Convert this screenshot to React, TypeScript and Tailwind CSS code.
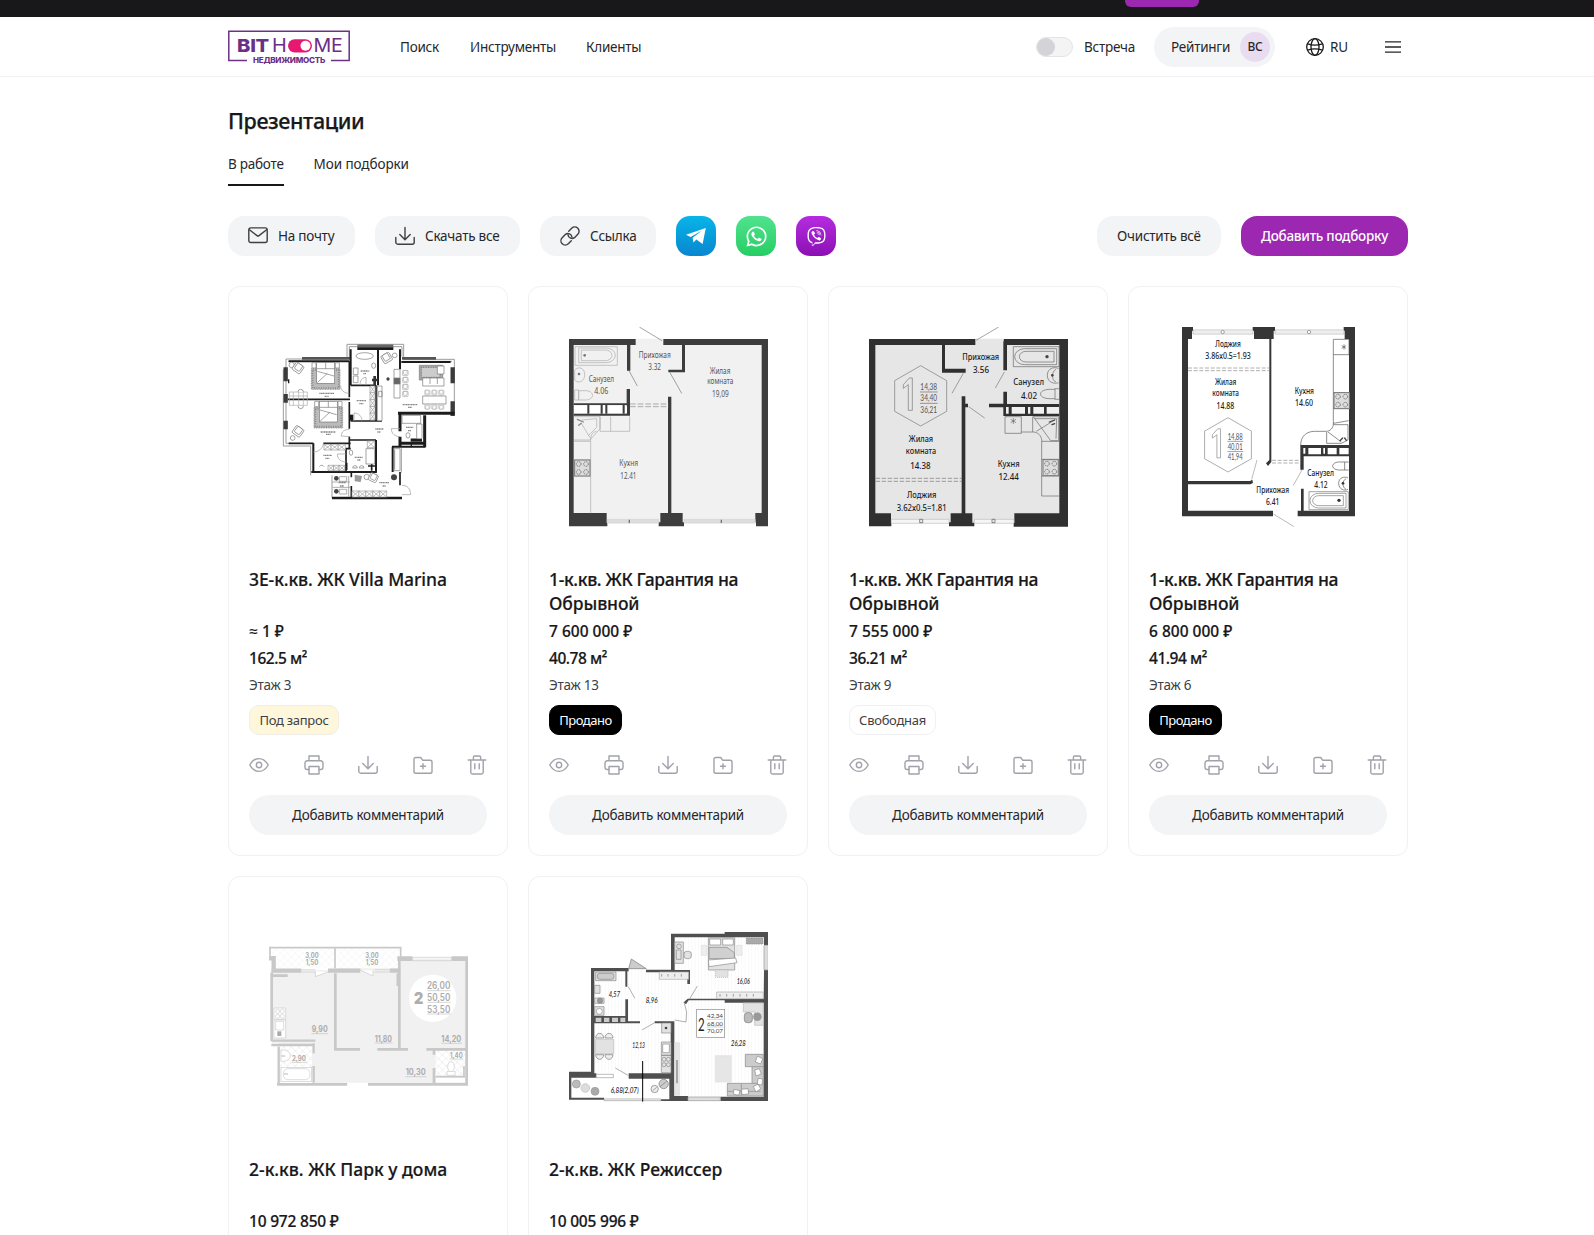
import type { ReactNode } from "react";
import { FaViber, FaWhatsapp } from "react-icons/fa";

/* ---------- icons ---------- */

function Icon({ children, width = 1.4, className = "" }: { children: ReactNode; width?: number; className?: string }) {
  return (
    <svg viewBox="0 0 20 20" fill="none" stroke="currentColor" strokeWidth={width} strokeLinecap="round" strokeLinejoin="round" className={`h-5 w-5 shrink-0 ${className}`}>
      {children}
    </svg>
  );
}

const EyeIcon = () => (
  <Icon>
    <path d="M.8 10C3 6 6.300 3.600 10 3.600S17 6 19.200 10C17 14 13.700 16.400 10 16.400S3 14 .8 10z" />
    <circle cx="10" cy="10" r="2.700" />
  </Icon>
);
const PrinterIcon = () => (
  <Icon>
    <path d="M5 5.800V1h10v4.800M5 14.500H3.200A2.200 2.200 0 0 1 1 12.300V8a2.200 2.200 0 0 1 2.200-2.200h13.600A2.200 2.200 0 0 1 19 8v4.300a2.200 2.200 0 0 1-2.200 2.200H15" />
    <path d="M5 11.500h10V19H5z" />
  </Icon>
);
const DownloadIcon = () => (
  <Icon>
    <path d="M10 1.500v12M4.800 8.500l5.200 5.200 5.200-5.200M.8 11.500v4.700A2 2 0 0 0 2.800 18.200h14.400a2 2 0 0 0 2-2v-4.700" />
  </Icon>
);
const FolderIcon = () => (
  <Icon>
    <path d="M1 4.300a1.800 1.800 0 0 1 1.800-1.800h4.800l2 2.700h7.600A1.800 1.800 0 0 1 19 7v9.400a1.800 1.800 0 0 1-1.800 1.800H2.800A1.800 1.800 0 0 1 1 16.400zM10 8.800v5M7.500 11.300h5" />
  </Icon>
);
const TrashIcon = () => (
  <Icon>
    <path d="M1.200 5h17.600M6.400 5V2.200a1.200 1.200 0 0 1 1.200-1.200h4.800a1.200 1.200 0 0 1 1.200 1.200V5M3.800 5v12.500A1.600 1.600 0 0 0 5.400 19h9.200a1.600 1.600 0 0 0 1.600-1.500V5M7.800 8.800v5M12.200 8.800v5" />
  </Icon>
);
const MailIcon = () => (
  <Icon>
    <rect x=".8" y="1.900" width="18.400" height="14.600" rx="2" />
    <path d="M1.400 3.800L9 9.600a1.600 1.600 0 0 0 2 0l7.600-5.800" />
  </Icon>
);
const LinkIcon = () => (
  <Icon>
    <path d="M8 8.800a4.200 4.200 0 0 0 6.500 2.900l3.300-3.400A4.300 4.300 0 0 0 11.700 2.200L8.700 5.200" />
    <path d="M12 11.200a4.200 4.200 0 0 0-6.500-2.900L2.200 11.700a4.300 4.300 0 0 0 6.100 6.100l3-3" />
  </Icon>
);
const GlobeIcon = () => (
  <svg viewBox="0 0 18 18" fill="none" stroke="#18181b" strokeWidth="1.3" className="h-[18px] w-[18px]">
    <circle cx="9" cy="9" r="8.300" />
    <ellipse cx="9" cy="9" rx="4" ry="8.300" />
    <path d="M1.600 5.800C6 7.300 12 7.300 16.400 5.800M1.600 12.200C6 10.700 12 10.700 16.400 12.200" />
  </svg>
);
const MenuIcon = () => (
  <svg viewBox="0 0 16 12" stroke="#27272a" strokeWidth="1.3" className="h-3 w-4">
    <path d="M0 .8h16M0 6h16M0 11.200h16" />
  </svg>
);
const TelegramIcon = () => (
  <svg viewBox="9 9 22 22" fill="currentColor" className="h-[22px] w-[22px]">
    <path d="M10 18.800L29.800 12 26.600 28l-6.200-4.400-3.100 2.800-.6-4.600L26 14.600 14.600 21z" />
  </svg>
);

function Logo() {
  return (
    <svg viewBox="0 0 122 34" className="h-[34px] w-[122px] shrink-0" fontFamily="Inter, sans-serif">
      <path d="M19 30.600H.8V1.200H121.200V30.600H103" fill="none" stroke="#6b3285" strokeWidth="1.500" />
      <text x="9" y="22.300" fontSize="18" fontWeight="800" fill="#6b2f86" textLength="32" lengthAdjust="spacingAndGlyphs">BIT</text>
      <text x="44" y="22.300" fontSize="18" fontWeight="400" fill="#6b2f86" textLength="14.500" lengthAdjust="spacingAndGlyphs">H</text>
      <rect x="60" y="9.200" width="24" height="13.200" rx="6.600" fill="#e6186f" />
      <circle cx="77.500" cy="15.800" r="5" fill="#fff" />
      <text x="85.500" y="22.300" fontSize="18" fontWeight="400" fill="#6b2f86" textLength="29" lengthAdjust="spacingAndGlyphs">ME</text>
      <text x="25" y="33.200" fontSize="7.800" fontWeight="800" fill="#6b2f86" textLength="72" lengthAdjust="spacingAndGlyphs">НЕДВИЖИМОСТЬ</text>
    </svg>
  );
}

/* ---------- floor plans ---------- */

type LabelProps = { x: number; y: number; w: number; s?: number; fill?: string; weight?: number; children: string };

function Label({ x, y, w, s = 29, fill = "#333", weight = 500, children }: LabelProps) {
  return (
    <text x={x} y={y} fontSize={s} fill={fill} fontWeight={weight} textAnchor="middle" textLength={w} lengthAdjust="spacingAndGlyphs">
      {children}
    </text>
  );
}

function Plan({ top = 123, font = "Noto Sans, sans-serif", children }: { top?: number; font?: string; children: ReactNode }) {
  return (
    <svg viewBox={`120 ${top} 600 600`} className="h-[200px] w-[200px]" fontFamily={font}>
      {children}
    </svg>
  );
}

function Hob({ x, y }: { x: number; y: number }) {
  return (
    <g fill="none" stroke="#777" strokeWidth="3">
      <rect x={x} y={y} width="46" height="48" fill="#ddd" />
      {[12, 34].map((dx) => [12, 36].map((dy) => <circle key={`${dx}-${dy}`} cx={x + dx} cy={y + dy} r="7" strokeDasharray="4 2" />))}
    </g>
  );
}

function Chair({ x, y, r = 0, s = 1 }: { x: number; y: number; r?: number; s?: number }) {
  return (
    <g transform={`translate(${x} ${y}) rotate(${r}) scale(${s})`} fill="#fff" stroke="#777" strokeWidth="2">
      <rect x="-14" y="-13" width="28" height="26" rx="4" />
      <rect x="-9" y="-13" width="18" height="20" rx="3" />
    </g>
  );
}

function Bed({ x, y }: { x: number; y: number }) {
  return (
    <g stroke="#777" strokeWidth="2">
      <rect x={x} y={y + 18} width="86" height="62" fill="#bbb" strokeDasharray="3 2" />
      <rect x={x + 4} y={y + 22} width="78" height="54" fill="none" stroke="#888" strokeWidth="5" strokeDasharray="3 4" />
      <rect x={x + 16} y={y} width="54" height="62" fill="#fff" />
      <path d={`M${x + 43} ${y}v18M${x + 16} ${y + 18}h54M${x + 18} ${y + 26}l50 14M${x + 18} ${y + 60}l30-28`} fill="none" />
      <path d={`M${x + 2} ${y}h12v16h-12zM${x + 72} ${y}h12v16h-12z`} fill="#fff" />
    </g>
  );
}

function Wardrobe({ x, y, w, h, n, vertical = false }: { x: number; y: number; w: number; h: number; n: number; vertical?: boolean }) {
  return (
    <g fill="#fff" stroke="#999" strokeWidth="2">
      {Array.from({ length: n }, (_, i) => {
        const cw = vertical ? w : w / n;
        const ch = vertical ? h / n : h;
        const cx = vertical ? x : x + i * cw;
        const cy = vertical ? y + i * ch : y;
        return <path key={i} d={`M${cx} ${cy}h${cw}v${ch}h${-cw}zl${cw} ${ch}M${cx + cw} ${cy}l${-cw} ${ch}`} />;
      })}
    </g>
  );
}

function VillaPlan() {
  return (
    <Plan>
      <g fill="none" stroke="#888" strokeWidth="2.500">
        <path d="M357 218v-43h170v45M364 218v-36h158v30M174 250v-31h184M527 220h152v30M180 226h180M522 226h150M166 250v230h82v88M174 250v222h82v84M679 250v134M520 486v74M312 568v68h210" />
      </g>
      <g fill="none" stroke="#1c1c1c">
        <path d="M222 217h144M522 217h102" strokeWidth="8" stroke="#555" />
        <path d="M388 180h108" strokeWidth="9" stroke="#666" />
        <path d="M388 188h108" strokeWidth="8" />
        <path d="M173 244v42M173 324v26M173 404v26M674 244v48M674 346v44" strokeWidth="13" stroke="#3b3b3b" />
        <path d="M182 226h182M368 190v108M450 190v108M516 190v60M520 228h148" strokeWidth="6" />
        <path d="M180 340h186M364 226v108M364 348v80M364 452v36M368 298h76M444 298v106M368 405h94M182 472h74M286 472h82" strokeWidth="5" />
        <path d="M510 382h170M516 382v54M516 452v30M590 388v96" strokeWidth="9" />
        <path d="M516 472h76M548 462h34" strokeWidth="9" />
        <path d="M492 482h100M494 482v76M256 472v88M250 558h196M444 462v98" strokeWidth="6" />
        <path d="M366 462h78M354 486v72M354 488h14M370 558v16M370 600v36M516 558v40" strokeWidth="5" />
        <path d="M370 386v18" strokeWidth="12" />
        <path d="M312 636h210" strokeWidth="8" />
        <path d="M432 282h18M440 270v28" strokeWidth="8" stroke="#333" />
        <path d="M420 540h22M431 530v24M356 530v22" strokeWidth="5" />
        <path d="M550 472v12M182 280v12" strokeWidth="4" />
      </g>
      <g fill="#fff" stroke="#777" strokeWidth="2">
        <ellipse cx="410" cy="210" rx="26" ry="10" />
        <ellipse cx="437" cy="239" rx="6" ry="8" />
        <path d="M376 246h14v20h-14zM376 270h14v20h-14zM448 300h14v104h-14zM452 316h10v16h-10zM498 250h18v86h-18z" />
        <path d="M574 238h70v44h-70z" fill="#aaa" />
        <path d="M580 244h56v30h-56z" fill="#ccc" stroke="#555" strokeDasharray="3 2" />
        <path d="M584 276h64v24h-64zM606 276v18M628 276v18M628 240h20v24h-20zM584 330h70v24h-70z" />
        <path d="M184 318h54v40h-54zM184 330h54M196 318v40M212 318v40M226 318v40" fill="none" stroke="#aaa" />
        <path d="M414 488h26v46h-26zM566 414h16v44h-16zM522 388h56v24h-56zM498 488h18v66h-18zM500 492v58" />
        <path d="M498 276h18v18h-18z" fill="#666" />
        <circle cx="191" cy="237" r="8" /><circle cx="500" cy="208" r="7" /><circle cx="194" cy="456" r="7" /><circle cx="416" cy="573" r="8" />
        <ellipse cx="540" cy="448" rx="6" ry="8" /><ellipse cx="369" cy="500" rx="5" ry="8" />
        <path d="M374 546a6 6 0 0 1 14 0zM394 546a6 6 0 0 1 14 0zM210 318a8 8 0 0 1 16 0M210 360a8 8 0 0 0 16 0M274 542a8 8 0 0 1 14 0" />
      </g>
      <Chair x={210} y={246} r={35} /><Chair x={210} y={436} r={35} /><Chair x={476} y={216} r={-30} /><Chair x={436} y={575} r={25} s={0.9} />
      <g><Chair x={532} y={261} s={0.6} /><Chair x={532} y={282} s={0.6} /><Chair x={532} y={303} s={0.6} /><Chair x={532} y={324} s={0.6} /></g>
      <g><Chair x={598} y={320} s={0.55} /><Chair x={619} y={320} s={0.55} /><Chair x={640} y={320} s={0.55} /><Chair x={598} y={362} s={0.55} r={180} /><Chair x={619} y={362} s={0.55} r={180} /><Chair x={640} y={362} s={0.55} r={180} /></g>
      <Bed x={250} y={230} /><Bed x={258} y={346} />
      <Wardrobe x={426} y={300} w={15} h={102} n={5} vertical />
      <Wardrobe x={288} y={475} w={64} h={17} n={3} /><Wardrobe x={300} y={538} w={50} h={16} n={3} />
      <Wardrobe x={372} y={615} w={104} h={18} n={5} /><Wardrobe x={418} y={465} w={22} h={20} n={1} />
      <g fill="#444">
        <circle cx="498" cy="574" r="9" /><circle cx="325" cy="577" r="7" /><circle cx="325" cy="616" r="7" />
        <circle cx="480" cy="279" r="5" /><path d="M380 566l22 4-4 18-18-2z" fill="#999" />
      </g>
      <path d="M334 572h22v14h-22zM334 610h22v14h-22zM314 588h52M314 604h52M362 570v62" fill="none" stroke="#888" strokeWidth="2" />
      <g fill="none" stroke="#999" strokeWidth="2">
        <path d="M364 322c-16 0-26-10-26-22M364 430c-14 0-24 6-24 20l26 2M516 428h-26c0 14 10 24 26 24M396 298c0-14 6-24 18-24v24M378 405v-24c14 0 24 10 24 24M256 498c16 0 30-12 30-26M354 504h-26c0 14 10 24 26 24M522 598c16 0 26 10 26 28h-26" />
      </g>
      <g fill="#888" stroke="#888" strokeWidth="4" strokeDasharray="4 1">
        <path d="M274 322h44M290 331h12M398 255h26M406 263h8M386 344h28M394 353h12M524 356h44M540 364h12M278 438h44M294 445h14M442 429h24M448 438h10M286 508h26M292 517h12M380 514h24M388 522h10M454 590h30M464 600h10M534 424h22M540 434h10M332 590h22M336 600h12" />
      </g>
    </Plan>
  );
}

function GarantiaPlanA() {
  return (
    <Plan>
      <path d="M130 165h580v545H130z" fill="#f1f1f1" />
      <path d="M322 158h84v8h-84z" fill="#f1f1f1" />
      <path d="M334 123l68 41M303 254l25 46M426 260l35 62" stroke="#777" strokeWidth="2" fill="none" />
      <g fill="#3d3d3d">
        <path d="M123 159h200v18H137v504h99v29h2v11H123zM406 159h314v562h-36v-12h-2v-28h19V177H471v82h-50v-8h41v-74h-56zM397 681h23V332h10v349h34v28h4v12h-76v-12h5z" />
        <path d="M297 177h10v77h-10zM296 309h10v80H137v-6h159v-26H137v-5h159z" />
      </g>
      <path d="M138 359h40v22h-40zM185 359h32v22h-32zM225 359h7v22h-7zM239 359h44v22h-44zM290 359h7v22h-7z" fill="#fff" />
      <path d="M181 357v26M221 357v26M235 357v26M287 357v26" stroke="#3d3d3d" strokeWidth="6" />
      <path d="M306 354h116M306 362h116" stroke="#aaa" strokeWidth="3" strokeDasharray="17 6" />
      <path d="M238 700h154v12H238zM468 700h214v12H468z" fill="#ddd" stroke="#c5c5c5" strokeWidth="1" />
      <path d="M302 701h4v10h-4zM578 701h4v10h-4z" fill="#777" />
      <g fill="none" stroke="#aaa" strokeWidth="2">
        <path d="M141 182h127v56H141zM152 186h82a28 22 0 0 1 0 44h-82zM160 192h72a20 16 0 0 1 0 32h-72z" />
        <path d="M140 312h12v30h-12zM152 314h22c26 2 26 26 0 28h-22zM140 252c8-10 30-10 30 14s-22 26-30 16z" />
        <path d="M138 392h78v44h89v-45M248 392v44M216 392v36l-30 34h-48M160 402l46-4v26l-26 26M138 466h50v216M205 436c-12 2-18 14-17 30M138 570h50M138 522h50M160 412l28 46" />
      </g>
      <circle cx="170" cy="208" r="4" fill="#777" /><circle cx="153" cy="264" r="4" fill="#777" />
      <path d="M148 400l18 8M152 418l8-6" stroke="#888" strokeWidth="4" strokeLinecap="round" fill="none" />
      <Hob x={140} y={522} />
      <Label x={380} y={216} w={96} fill="#555" weight={400}>Прихожая</Label>
      <Label x={380} y={252} w={38} fill="#555" weight={400}>3.32</Label>
      <Label x={220} y={288} w={76} fill="#555" weight={400}>Санузел</Label>
      <Label x={220} y={323} w={42} fill="#555" weight={400}>4.06</Label>
      <Label x={576} y={263} w={62} fill="#555" weight={400}>Жилая</Label>
      <Label x={577} y={295} w={78} fill="#555" weight={400}>комната</Label>
      <Label x={577} y={333} w={50} fill="#555" weight={400}>19,09</Label>
      <Label x={302} y={540} w={56} fill="#555" weight={400}>Кухня</Label>
      <Label x={301} y={578} w={48} fill="#555" weight={400}>12.41</Label>
    </Plan>
  );
}

function AreaHexagon({ x, y, k = 1, values, fill }: { x: number; y: number; k?: number; values: string[]; fill: string }) {
  return (
    <g transform={`translate(${x} ${y}) scale(${k})`} fontFamily="Lato, sans-serif">
      <path d="M0-90l78 45v92L0 91l-78-44v-92z" fill="none" stroke="#777" strokeWidth="2" />
      <path d="M-52-33l18-20h9V44h-12V-33l-15 11z" fill={fill} stroke="#777" strokeWidth="2" />
      {values.map((v, i) => (
        <text key={v} x="24" y={-17 + i * 34} fontSize="29" fill="#555" textAnchor="middle" textLength="50" lengthAdjust="spacingAndGlyphs">{v}</text>
      ))}
      <path d="M-2-11h53M-2 23h53" stroke="#666" strokeWidth="2" />
    </g>
  );
}

function GarantiaPlanB() {
  return (
    <Plan>
      <path d="M130 165h580v545H130z" fill="#e6e6e6" />
      <path d="M442 158h86v9h-86z" fill="#e6e6e6" />
      <path d="M444 163l68-40M407 260l-35 62M529 258l-27 48M422 362l48 34" stroke="#777" strokeWidth="2" fill="none" />
      <g fill="#303030">
        <path d="M123 159h319v18h-91v71h62v12h-71v-83H142v505h47v28h1v11H123zM528 159h192v563H557v-11h2v-29h135V177H537v76h-11v-84zM401 331h11v22h8v11h-8v318h21v28h6v11h-76v-12h5v-27h33z" />
        <path d="M483 353h43v-36h11v37h157v36H526v-26h-43z" />
      </g>
      <path d="M534 363h8v20h-8zM551 363h40v20h-40zM600 363h7v20h-7zM616 363h32v20h-32zM656 363h37v20h-37z" fill="#f0f0f0" />
      <path d="M143 577h258M143 586h258" stroke="#777" strokeWidth="2" strokeDasharray="13 5" />
      <path d="M190 700h173v12H190zM439 700h119v12H439z" fill="#f5f5f5" stroke="#aaa" strokeWidth="1.500" />
      <path d="M275 700h9v10h-9zM492 700h9v10h-9z" fill="#eee" stroke="#555" strokeWidth="2" />
      <g fill="none" stroke="#666" strokeWidth="2">
        <path d="M556 182h137v60H556zM686 188h-96a30 24 0 0 0 0 48h96zM678 196h-84a20 16 0 0 0 0 32h84z" />
        <path d="M693 308h-12v32h12M681 310h-18c-34 2-34 26 0 28h18M692 248c-10-6-34-4-34 20s24 26 34 22M684 250c-14 6-14 34 0 38" />
        <path d="M531 392h49v50h-49zM580 438h34v-46M616 392h76v72h-24zM620 398h66l-2 60M641 630V466h52M693 630h-52M614 438c16 0 26 10 28 28M641 520h52M641 570h52M625 436l55-34" />
        <path d="M556 396v18M548 400l16 10M564 400l-16 10" strokeWidth="2" />
      </g>
      <circle cx="657" cy="212" r="5" fill="#444" /><circle cx="673" cy="268" r="4" fill="#444" />
      <path d="M664 408l16-6M672 416l8-3" stroke="#444" strokeWidth="4" strokeLinecap="round" fill="none" />
      <Hob x={645} y={521} />
      <AreaHexagon x={278} y={329} fill="#e6e6e6" values={["14,38", "34,40", "36,21"]} />
      <Label x={458} y={221} w={111} fill="#1d1d1d">Прихожая</Label>
      <Label x={459} y={260} w={48} fill="#1d1d1d">3.56</Label>
      <Label x={602} y={298} w={92} fill="#1d1d1d">Санузел</Label>
      <Label x={603} y={338} w={48} fill="#1d1d1d">4.02</Label>
      <Label x={279} y={467} w={73} fill="#1d1d1d">Жилая</Label>
      <Label x={279} y={504} w={91} fill="#1d1d1d">комната</Label>
      <Label x={277} y={550} w={61} fill="#1d1d1d">14.38</Label>
      <Label x={542} y={543} w={65} fill="#1d1d1d">Кухня</Label>
      <Label x={542} y={583} w={61} fill="#1d1d1d">12.44</Label>
      <Label x={281} y={636} w={88} fill="#1d1d1d">Лоджия</Label>
      <Label x={281} y={676} w={150} fill="#1d1d1d">3.62х0.5=1.81</Label>
    </Plan>
  );
}

function GarantiaPlanC() {
  return (
    <Plan>
      <g fill="#363636">
        <path d="M162 123h33v12h-3v24h-12v426h186l7-4 2 10-8 4H180v79h255v17H162zM374 123h67v12h-4v24h-7v369l-10 12-6-8 10-10V159h-46v-24h-4zM647 123h34v568H509v-17h10v-66h8v66h136V159h-13v-24h-3z" />
        <path d="M517 477h146v34H527v40h-10z" />
      </g>
      <path d="M526 486h6v17h-6zM541 486h38v19h-38zM586 486h5v17h-5zM599 486h27v19h-27zM634 486h28v19h-28z" fill="#fff" />
      <path d="M195 132h180v12H195zM441 132h207v12H441z" fill="#fff" stroke="#aaa" strokeWidth="2" />
      <path d="M195 138h180M441 138h207" stroke="#bbb" strokeWidth="1.500" />
      <circle cx="284" cy="138" r="5" fill="#fff" stroke="#777" strokeWidth="2" /><circle cx="543" cy="138" r="5" fill="#fff" stroke="#777" strokeWidth="2" />
      <path d="M180 246h245M180 254h245M432 523h88M432 531h88" stroke="#888" strokeWidth="2" strokeDasharray="12 5" />
      <path d="M387 522l-16 58M522 552l-26 46M436 684l62 38" stroke="#999" strokeWidth="2" fill="none" />
      <g fill="none" stroke="#555" strokeWidth="2">
        <path d="M616 160h47v46h-47zM616 206v208c0 12-10 22-22 22h-34c-24 0-42 14-42 42M662 404l-46 8M616 416h44v46l-20 10h-44v-34M600 438l40 30M616 320h46M616 366h46" />
        <path d="M662 528h-12v24h12M650 528h-18c-24 2-24 22 0 24h18M660 576c-10-6-28-2-28 16s18 24 28 18M654 578c-12 6-12 26 0 32" />
        <path d="M543 617h118v54H543zM654 622h-82a24 20 0 0 0 0 44h82zM646 629h-74a18 15 0 0 0 0 30h74z" stroke="#777" />
        <path d="M648 175v16M641 179l13 8M654 179l-13 8" />
      </g>
      <circle cx="633" cy="643" r="5" fill="#333" /><circle cx="645" cy="592" r="4" fill="#333" />
      <path d="M636 464l8-8M650 456l5 7" stroke="#444" strokeWidth="4" strokeLinecap="round" fill="none" />
      <Hob x={618} y={320} />
      <AreaHexagon x={300} y={476} k={0.9} fill="#fff" values={["14,88", "40,01", "41,94"]} />
      <Label x={300} y={184} w={76} fill="#222">Лоджия</Label>
      <Label x={300} y={220} w={136} fill="#222">3.86х0.5=1.93</Label>
      <Label x={293} y={298} w={64} fill="#222">Жилая</Label>
      <Label x={293} y={329} w={80} fill="#222">комната</Label>
      <Label x={292} y={370} w={53} fill="#222">14.88</Label>
      <Label x={529} y={323} w={58} fill="#222">Кухня</Label>
      <Label x={528} y={359} w={54} fill="#222">14.60</Label>
      <Label x={578} y={570} w={80} fill="#222">Санузел</Label>
      <Label x={579} y={607} w={40} fill="#222">4.12</Label>
      <Label x={434} y={622} w={98} fill="#222">Прихожая</Label>
      <Label x={434} y={657} w={40} fill="#222">6.41</Label>
    </Plan>
  );
}

function ParkPlan() {
  const rooms: [number, number, number, string][] = [
    [252, 265, 40, "3,00"], [252, 286, 38, "1,50"], [432, 265, 40, "3,00"], [432, 286, 38, "1,50"],
    [275, 487, 48, "9,90"], [466, 515, 52, "11,80"], [670, 516, 60, "14,20"], [563, 616, 60, "10,30"], [213, 573, 42, "2,90"], [685, 563, 38, "1,40"],
  ];
  return (
    <Plan top={141} font="Inter, sans-serif">
      <defs>
        <pattern id="tiles" width="16" height="16" patternUnits="userSpaceOnUse" patternTransform="rotate(45)">
          <path d="M0 0h16v16" fill="none" stroke="#ddd" strokeWidth="2" />
        </pattern>
        <pattern id="balcony" width="16" height="16" patternUnits="userSpaceOnUse" patternTransform="rotate(45)">
          <path d="M0 0h16v16" fill="none" stroke="#efefef" strokeWidth="2" />
        </pattern>
      </defs>
      <path d="M128 300h190v-5h200v-30h200v380H152V520h-20z" fill="#f1f1f1" />
      <path d="M157 525h95v115h-95zM623 543h88v75h-88z" fill="#fff" />
      <path d="M128 237h188v58H128zM327 237h186v58H327z" fill="url(#balcony)" />
      <path d="M157 525h95v65h-95zM623 543h88v75h-88z" fill="url(#tiles)" />
      <g fill="none" stroke="#c8c8c8">
        <path d="M123 233h395v35M126 233v28M321 233v62" strokeWidth="5" />
        <path d="M123 265h14M137 258v50M130 302h90M300 302h97M485 302h32" strokeWidth="13" />
        <path d="M131 308v205M135 317h44M322 310v230M514 262v276M716 265v380" strokeWidth="8" />
        <path d="M508 310v38" strokeWidth="5" />
        <path d="M508 266h46M670 266h52" strokeWidth="14" />
        <path d="M130 512h132M130 525h125M257 520v30M257 588v50M152 530v114" strokeWidth="7" />
        <path d="M318 538h78M448 538h92M595 538h120M147 643h211M420 643h302M618 538v16M618 594v46" strokeWidth="8" />
        <path d="M623 620h88M708 588v30" strokeWidth="5" />
        <path d="M220 299h42M220 306h42M440 299h45M440 306h45M554 262h116M554 272h116" strokeWidth="2" />
        <path d="M262 304v16l38-14M397 300l38 18v-16" strokeWidth="2" fill="#fff" />
      </g>
      <path d="M625 624h86v13h-86zM358 638h62v12h-62z" fill="#fff" />
      <g fill="#fff" stroke="#ccc" strokeWidth="2">
        <path d="M138 414h35v34h-35zM138 450h35v54h-35zM143 454h24v26h-24z" />
        <circle cx="149" cy="424" r="6" /><circle cx="163" cy="424" r="6" /><circle cx="149" cy="439" r="6" /><circle cx="163" cy="439" r="6" />
        <rect x="159" y="592" width="92" height="42" /><rect x="166" y="596" width="80" height="33" rx="14" />
        <path d="M159 540h10c24 4 24 30 0 34h-10zM657 604h24v12h-24z" /><ellipse cx="669" cy="590" rx="10" ry="15" />
        <path d="M160 558h12M168 612h12" stroke="#999" />
      </g>
      <path d="M148 484h12v14h-12z" fill="#aaa" />
      <circle cx="614" cy="385" r="71" fill="#fff" />
      <Label x={572} y={401} w={28} s={47} fill="#adadad" weight={900}>2</Label>
      {["26,00", "50,50", "53,50"].map((v, i) => (
        <Label key={v} x={632} y={358 + i * 35} w={70} s={30} fill="#adadad" weight={600}>{v}</Label>
      ))}
      <path d="M598 362h70M598 397h70M598 432h70M250 491h50M440 519h54M640 520h62M532 620h64M192 577h44M664 567h42" stroke="#c2c2c2" strokeWidth="2" />
      {rooms.map(([x, y, w, v], i) => (
        <Label key={i} x={x} y={y} w={w} s={w > 45 ? 26 : 21} fill="#adadad" weight={700}>{v}</Label>
      ))}
    </Plan>
  );
}

function RegisseurPlan() {
  return (
    <Plan top={141} font="Lato, sans-serif">
      <defs>
        <pattern id="floor" width="10" height="10" patternUnits="userSpaceOnUse">
          <path d="M0 0v10" stroke="#f3f3f3" strokeWidth="3" />
        </pattern>
      </defs>
      <path d="M194 300h242V194h280v495H436V610H194z" fill="url(#floor)" />
      <g fill="#4f4f4f">
        <path d="M429 191h161v-5h132v39h-14v-23H440v98h46v42h-8v-35H354v-8h75zM708 300h14v393H577v-13h130V398H590v-7H482l-8 12-7-6 12-11h228zM189 294h113v10h-4v46h-6v-46h-93v134h93v-50h8v66H336v6H199v150h6v13h-75v60h98v6H123v-84h66zM380 454h59v224h41v15h-81v-5h25v-62H302v-16h126V460h-48z" />
      </g>
      <path d="M203 443h17v13h-17zM228 443h16v13h-16zM252 443h18v13h-18zM277 443h15v13h-15z" fill="#ccc" />
      <path d="M708 226h13v74h-13zM480 681h97v11h-97z" fill="#ddd" stroke="#999" strokeWidth="2" />
      <path d="M205 613h51v10h-51zM228 687h171v5H228z" fill="#fff" stroke="#999" strokeWidth="2" />
      <path d="M302 296l8-29 45 29z" fill="#ccc" stroke="#777" strokeWidth="2" />
      <path d="M301 350l19 34M484 388l24-40M342 480l38-22M262 594l38 22M440 450l34 6M474 456l2-30-8-30" stroke="#888" strokeWidth="2" fill="none" />
      <g fill="#e2e2e2" stroke="#888" strokeWidth="2">
        <path d="M203 306h61v26h-61zM200 346h16v24h-16zM200 384h28v16h-28zM200 410h28v26h-28z" />
        <rect x="208" y="310" width="50" height="18" rx="7" fill="#ccc" />
        <circle cx="214" cy="424" r="9" fill="#fff" /><circle cx="216" cy="392" r="8" fill="#999" />
        <path d="M394 306h88v22h-88zM566 366h140v20H566z" fill="#eee" stroke="#aaa" />
        <path d="M401 312v8M420 312v8M440 312v8M460 312v8M576 372v8M596 372v8M616 372v8M636 372v8M656 372v8M676 372v8" stroke="#777" />
        <path d="M202 508h55v43h-55z" stroke="#bbb" />
        <path d="M401 459h28v30h-28zM400 516h29v40h-29zM400 556h29v52h-29z" />
        <path d="M404 522h20v26h-20z" fill="#fff" />
        <circle cx="408" cy="568" r="6" /><circle cx="421" cy="568" r="6" /><circle cx="408" cy="584" r="6" /><circle cx="421" cy="584" r="6" />
        <path d="M440 216h26v64h-26zM445 240h14v28h-14z" /><rect x="468" y="244" width="22" height="22" rx="8" />
        <circle cx="453" cy="229" r="7" />
        <path d="M520 226h16v30h-16zM626 226h16v30h-16z" fill="#eee" stroke="#ddd" />
        <path d="M541 203h79v97h-79z" /><path d="M545 207h33v18h-33zM584 207h32v18h-32z" fill="#fff" />
        <path d="M543 232h54l22 16v18h-76z" fill="#d0d0d0" /><path d="M541 270l82-6 4 14-84 12z" fill="#fff" />
        <path d="M562 300h38v22h-38z" stroke="#aaa" strokeDasharray="3 3" />
        <path d="M655 204h50v18h-50z" fill="#aaa" strokeDasharray="5 2" />
        <path d="M646 399h60v67h-26v-40h-34z" stroke="#bbb" /><rect x="649" y="428" width="24" height="30" rx="9" fill="#bbb" stroke="#777" /><circle cx="688" cy="440" r="12" fill="#999" strokeDasharray="3 3" />
        <path d="M562 557h48v79h-48zM440 518h15v158h-15z" fill="#e6e6e6" stroke="#e0e0e0" />
        <path d="M652 553h54v125H598v-38h74v-50h-20z" fill="#ccc" />
        <path d="M672 590h34M672 640h34M640 642v34M598 664h100" fill="none" />
        <path d="M688 558l16 8-6 16-16-6zM680 600l14-4 6 16-16 6zM690 625l14 2-2 18-14-2zM676 650l14-8 8 14-14 10zM640 658l20-2 2 16-20 2zM618 658l18 4-4 14-16-4z" fill="#fff" />
      </g>
      <path d="M447 570v70" stroke="#999" strokeWidth="5" />
      <circle cx="414" cy="474" r="4" fill="#444" />
      <g fill="#eee" stroke="#777" strokeWidth="2">
        <path d="M203 504a12 14 0 0 1 24 0zM231 504a12 14 0 0 1 24 0zM203 554a12 14 0 0 0 24 0zM231 554a12 14 0 0 0 24 0z" />
        <circle cx="145" cy="642" r="12" fill="#bbb" stroke="#999" /><circle cx="172" cy="654" r="13" fill="#ddd" stroke="#bbb" /><circle cx="201" cy="664" r="12" fill="#aaa" stroke="#999" />
        <circle cx="407" cy="642" r="14" fill="#ccc" /><circle cx="380" cy="657" r="11" /><path d="M396 650l20-16M374 662l12-10" />
      </g>
      <path d="M344 573v122" stroke="#000" strokeWidth="3" />
      <rect x="506" y="418" width="84" height="84" fill="#fff" stroke="#888" strokeWidth="2" />
      <Label x={520} y={483} w={20} s={52} fill="#222" weight={400}>2</Label>
      <Label x={561} y={444} w={48} s={18} fill="#444" weight={400}>42,34</Label>
      <Label x={561} y={467} w={48} s={18} fill="#444" weight={400}>68,00</Label>
      <Label x={561} y={490} w={48} s={18} fill="#444" weight={400}>70,07</Label>
      <path d="M536 448h50M536 471h50" stroke="#aaa" strokeWidth="1.500" />
      <g fontStyle="italic">
        <Label x={259} y={380} w={34} s={20} fill="#222">4,57</Label>
        <Label x={371} y={398} w={36} s={20} fill="#222">8,96</Label>
        <Label x={646} y={341} w={40} s={20} fill="#222">16,06</Label>
        <Label x={332} y={535} w={38} s={20} fill="#222">12,13</Label>
        <Label x={631} y={528} w={44} s={20} fill="#222">26,28</Label>
        <Label x={290} y={668} w={84} s={20} fill="#222">6,88(2,07)</Label>
      </g>
    </Plan>
  );
}

/* ---------- cards ---------- */

type Status = "request" | "sold" | "free";
type Details = { area: string; floor: number; status: Status };
type Flat = { plan: ReactNode; title: ReactNode; price: string; priceClass?: string; details?: Details };

const statusStyles: Record<Status, { label: string; className: string }> = {
  request: { label: "Под запрос", className: "w-[90px] border-[#f0eee4] bg-[#fef7dc] text-[#3f3f46]" },
  sold: { label: "Продано", className: "w-[73px] border-black bg-black text-white tracking-[-0.45px]" },
  free: { label: "Свободная", className: "w-[87px] border-[#f0f0f2] bg-white text-[#3f3f46]" },
};

const garantia = (
  <span className="tracking-[-0.34px]">
    1-к.кв. ЖК Гарантия на <span className="tracking-[-0.1px]">Обрывной</span>
  </span>
);

const flats: Flat[] = [
  { plan: <VillaPlan />, title: <span className="tracking-[-0.08px]">3Е-к.кв. ЖК Villa Marina</span>, price: "≈ 1 ₽", details: { area: "162.5", floor: 3, status: "request" } },
  { plan: <GarantiaPlanA />, title: garantia, price: "7 600 000 ₽", details: { area: "40.78", floor: 13, status: "sold" } },
  { plan: <GarantiaPlanB />, title: garantia, price: "7 555 000 ₽", details: { area: "36.21", floor: 9, status: "free" } },
  { plan: <GarantiaPlanC />, title: garantia, price: "6 800 000 ₽", details: { area: "41.94", floor: 6, status: "sold" } },
  { plan: <ParkPlan />, title: <span>2-к.кв. ЖК Парк у дома</span>, price: "10 972 850 ₽", priceClass: "tracking-[-0.2px]" },
  { plan: <RegisseurPlan />, title: <span className="tracking-[-0.05px]">2-к.кв. ЖК Режиссер</span>, price: "10 005 996 ₽", priceClass: "tracking-[-0.2px]" },
];

function FlatDetails({ area, floor, status }: Details) {
  const badge = statusStyles[status];
  return (
    <>
      <p className="mt-[3px] text-[15.5px] leading-6 font-medium tracking-[-0.45px] text-[#18181b] [-webkit-text-stroke:0.2px]">{area} м²</p>
      <p className="mt-[3px] text-[13.5px] leading-6 tracking-[-0.24px] text-[#3f3f46]">Этаж {floor}</p>
      <div className={`mt-2 flex h-[30px] shrink-0 items-center justify-center rounded-[10px] border text-[13px] tracking-[-0.28px] ${badge.className}`}>
        <span className="pt-px">{badge.label}</span>
      </div>
      <div className="mt-5 flex items-center justify-between text-[#a1a1aa]">
        <EyeIcon />
        <PrinterIcon />
        <DownloadIcon />
        <FolderIcon />
        <TrashIcon />
      </div>
      <button className="mt-5 h-10 shrink-0 rounded-full bg-[#f3f4f6] text-[13.5px] tracking-[-0.24px] text-[#27272a]">Добавить комментарий</button>
    </>
  );
}

function FlatCard({ flat }: { flat: Flat }) {
  return (
    <article className="flex h-[570px] flex-col rounded-xl border border-[#f1f1f3] bg-white px-5 pt-5 pb-5">
      <div className="flex h-[240px] shrink-0 items-center justify-center">{flat.plan}</div>
      <h2 className="mt-5 h-12 shrink-0 text-[17.5px] leading-6 font-medium text-[#18181b] [-webkit-text-stroke:0.2px]">{flat.title}</h2>
      <p className={`mt-1 text-[15.5px] leading-6 font-medium text-[#18181b] [-webkit-text-stroke:0.2px] ${flat.priceClass ?? "tracking-[0px]"}`}>{flat.price}</p>
      {flat.details && <FlatDetails {...flat.details} />}
    </article>
  );
}

/* ---------- page ---------- */

function ToolButton({ icon, className, children }: { icon?: ReactNode; className: string; children: string }) {
  return (
    <button className={`flex h-10 items-center rounded-2xl bg-[#f3f4f6] px-5 text-[13.5px] tracking-[-0.24px] whitespace-nowrap text-[#27272a] ${className}`}>
      {icon && <span className="mr-2.5 text-[#3f3f46]">{icon}</span>}
      {children}
    </button>
  );
}

export default function App() {
  return (
    <div className="h-[1235px] overflow-hidden bg-white font-['Noto_Sans','Open_Sans',sans-serif] text-[#27272a]">
      <div className="flex h-[17px] bg-[#18181b] pl-[1125px]">
        <div className="h-[7px] w-[74px] rounded-b-md bg-[#9c27b0]" />
      </div>

      <header className="flex h-[60px] items-center border-b border-[#f1f1f3] pt-px pl-[228px] text-[13.5px] tracking-[-0.24px]">
        <Logo />
        <nav className="ml-[50px] flex">
          <a className="w-[70px]">Поиск</a>
          <a className="w-[116px]">Инструменты</a>
          <a className="w-[54px]">Клиенты</a>
        </nav>
        <div className="ml-[396px] flex h-5 w-[37px] items-center rounded-full border border-[#e4e4e7] bg-[#f4f4f5]">
          <div className="h-[18px] w-[18px] rounded-full bg-[#d4d4d8]" />
        </div>
        <span className="ml-[11px] w-[50px]">Встреча</span>
        <div className="ml-5 flex h-10 w-[121px] items-center justify-between rounded-full bg-[#f3f4f6] pr-[5px] pl-[17px]">
          Рейтинги
          <span className="flex h-[30px] w-[30px] items-center justify-center rounded-full bg-[#eadcf0] text-xs font-medium">ВС</span>
        </div>
        <div className="ml-[31px] flex w-[79px] items-center gap-1.5">
          <GlobeIcon />
          RU
        </div>
        <MenuIcon />
      </header>

      <main className="w-[1408px] pl-[228px]">
        <h1 className="pt-7 text-[21.5px] leading-8 font-medium tracking-[-0.4px] text-[#18181b] [-webkit-text-stroke:0.25px]">Презентации</h1>
        <div className="mt-[11px] flex gap-[30px] text-[13.5px] leading-8 tracking-[-0.24px]">
          <a className="h-[38px] border-b-2 border-[#18181b]">В работе</a>
          <a className="tracking-[-0.08px]">Мои подборки</a>
        </div>

        <div className="mt-[30px] flex gap-5">
          <ToolButton icon={<MailIcon />} className="w-[127px]">На почту</ToolButton>
          <ToolButton icon={<DownloadIcon />} className="w-[145px]">Скачать все</ToolButton>
          <ToolButton icon={<LinkIcon />} className="w-[116px]">Ссылка</ToolButton>
          <a className="flex h-10 w-10 items-center justify-center rounded-[14px] bg-linear-to-b from-[#08b5e8] to-[#0a86cf] text-white"><TelegramIcon /></a>
          <a className="flex h-10 w-10 items-center justify-center rounded-[14px] bg-linear-to-b from-[#4fe38e] to-[#24cd63] text-white"><FaWhatsapp size={23} /></a>
          <a className="flex h-10 w-10 items-center justify-center rounded-[14px] bg-linear-to-b from-[#b52be0] to-[#8c0fb4] text-white"><FaViber size={19} /></a>
          <ToolButton className="ml-auto w-[124px]">Очистить всё</ToolButton>
          <button className="h-10 w-[167px] rounded-2xl bg-[#9c27b0] text-[13.5px] font-medium tracking-[-0.27px] text-white">Добавить подборку</button>
        </div>

        <div className="mt-[30px] grid grid-cols-4 gap-5">
          {flats.map((flat, i) => (
            <FlatCard key={i} flat={flat} />
          ))}
        </div>
      </main>
    </div>
  );
}
